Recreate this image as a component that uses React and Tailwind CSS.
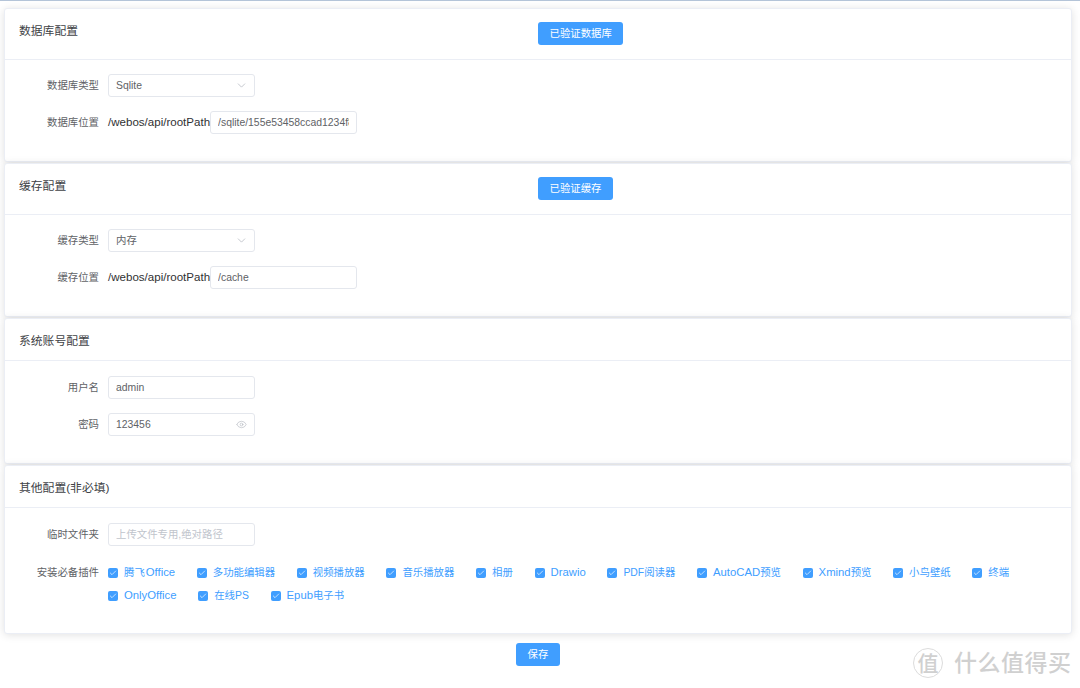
import React from 'react';
import { ChevronDown, Eye, Check } from 'lucide-react';

const plugins = [
  '腾飞Office', '多功能编辑器', '视频播放器', '音乐播放器', '相册', 'Drawio', 'PDF阅读器',
  'AutoCAD预览', 'Xmind预览', '小鸟壁纸', '终端', 'OnlyOffice', '在线PS', 'Epub电子书',
];

const font = "font-['Liberation_Sans','Noto_Sans_CJK_SC',sans-serif]";
const inputBox = 'h-[23px] w-[147px] rounded-[3px] border border-[#e4e7ed] bg-white px-[7px] text-[10.4px] text-[#606266] outline-none';

function Card({ title, button, bodyClass, children }) {
  return (
    <section className="rounded-[3px] border border-[#ebeef5] bg-white shadow-[0_1px_8px_rgba(0,0,0,0.12)]">
      <div className={`relative border-b border-[#ebeef5] pl-[14px] pt-[14px] ${button ? 'h-[51px]' : 'h-[42px]'}`}>
        <h3 className="text-[11.8px] leading-[16px] font-normal text-[#404246]">{title}</h3>
        {button && (
          <button className="absolute left-[533px] top-[13px] h-[23px] rounded-[3px] bg-[#409eff] px-[11.5px] text-[10.4px] text-white">
            {button}
          </button>
        )}
      </div>
      <div className={`flex flex-col gap-[14px] ${bodyClass}`}>{children}</div>
    </section>
  );
}

function Row({ label, children }) {
  return (
    <div className="flex items-center">
      <label className="mr-[9px] w-[94px] text-right text-[10.4px] text-[#606266]">{label}</label>
      {children}
    </div>
  );
}

function Select({ value }) {
  return (
    <div className={`flex items-center justify-between ${inputBox}`}>
      <span>{value}</span>
      <ChevronDown size={13} strokeWidth={1.4} className="-mr-[1px] text-[#b4b8c0]" />
    </div>
  );
}

function PathInput({ value }) {
  return (
    <>
      <span className="text-[11.55px] text-[#303133]">/webos/api/rootPath</span>
      <input readOnly value={value} className={inputBox} />
    </>
  );
}

// mixed-case latin runs in the plugin labels sit a bit wider than the cjk ones
function PluginName({ name }) {
  return name.split(/([A-Z]?[a-zA-Z]*[a-z][a-zA-Z]*)/).filter(Boolean).map((part, i) =>
    /[a-z]/.test(part)
      ? <span key={part} className={`text-[11.3px] ${i > 0 ? 'ml-px' : ''}`}>{part}</span>
      : <span key={part}>{part}</span>
  );
}

export default function App() {
  return (
    <div className={`relative h-[688px] w-[1080px] overflow-hidden bg-white ${font}`}>
      <div className="h-px bg-[#b4c4d8]" />
      <div className="flex w-[1068px] ml-1 mt-[7px] flex-col gap-px">
        <Card title="数据库配置" button="已验证数据库" bodyClass="h-[101px] pt-[14px]">
          <Row label="数据库类型"><Select value="Sqlite" /></Row>
          <Row label="数据库位置"><PathInput value="/sqlite/155e53458ccad1234f8a" /></Row>
        </Card>
        <Card title="缓存配置" button="已验证缓存" bodyClass="h-[101px] pt-[14px]">
          <Row label="缓存类型"><Select value="内存" /></Row>
          <Row label="缓存位置"><PathInput value="/cache" /></Row>
        </Card>
        <Card title="系统账号配置" bodyClass="h-[102px] pt-[15px]">
          <Row label="用户名"><input readOnly value="admin" className={inputBox} /></Row>
          <Row label="密码">
            <div className={`flex items-center justify-between ${inputBox}`}>
              <span>123456</span>
              <Eye size={11} strokeWidth={1.4} className="text-[#b4b8c0]" />
            </div>
          </Row>
        </Card>
        <Card title="其他配置(非必填)" bodyClass="h-[125px] pt-[15px]">
          <Row label="临时文件夹">
            <input readOnly placeholder="上传文件专用,绝对路径" className={`${inputBox} placeholder:text-[#c0c4cc]`} />
          </Row>
          <div className="mt-px flex items-start">
            <label className="mr-[9px] w-[94px] shrink-0 pt-[4px] text-right text-[10.4px] text-[#606266]">安装必备插件</label>
            <div className="flex flex-wrap">
              {plugins.map((name) => (
                <span key={name} className="mr-[21.7px] flex h-[23px] items-center text-[10.4px] text-[#409eff]">
                  <span className="mr-[6px] flex h-[10px] w-[10px] items-center justify-center rounded-[2px] bg-[#409eff]">
                    <Check size={8} strokeWidth={2} className="text-white" />
                  </span>
                  <span><PluginName name={name} /></span>
                </span>
              ))}
            </div>
          </div>
        </Card>
      </div>
      <div className="mt-[9px] flex justify-center pr-[4px]">
        <button className="h-[23px] w-[44px] rounded-[3px] bg-[#409eff] text-[10.4px] text-white">保存</button>
      </div>
      <div className="absolute left-[913px] top-[648px] flex items-center text-[#d0d0d0]">
        <span className="flex h-[30px] w-[30px] items-center justify-center rounded-full border border-[#dcdcdc] text-[21px] leading-none font-medium">值</span>
        <span className="ml-[11px] text-[23px] leading-none tracking-[0.5px] font-medium">什么值得买</span>
      </div>
    </div>
  );
}
